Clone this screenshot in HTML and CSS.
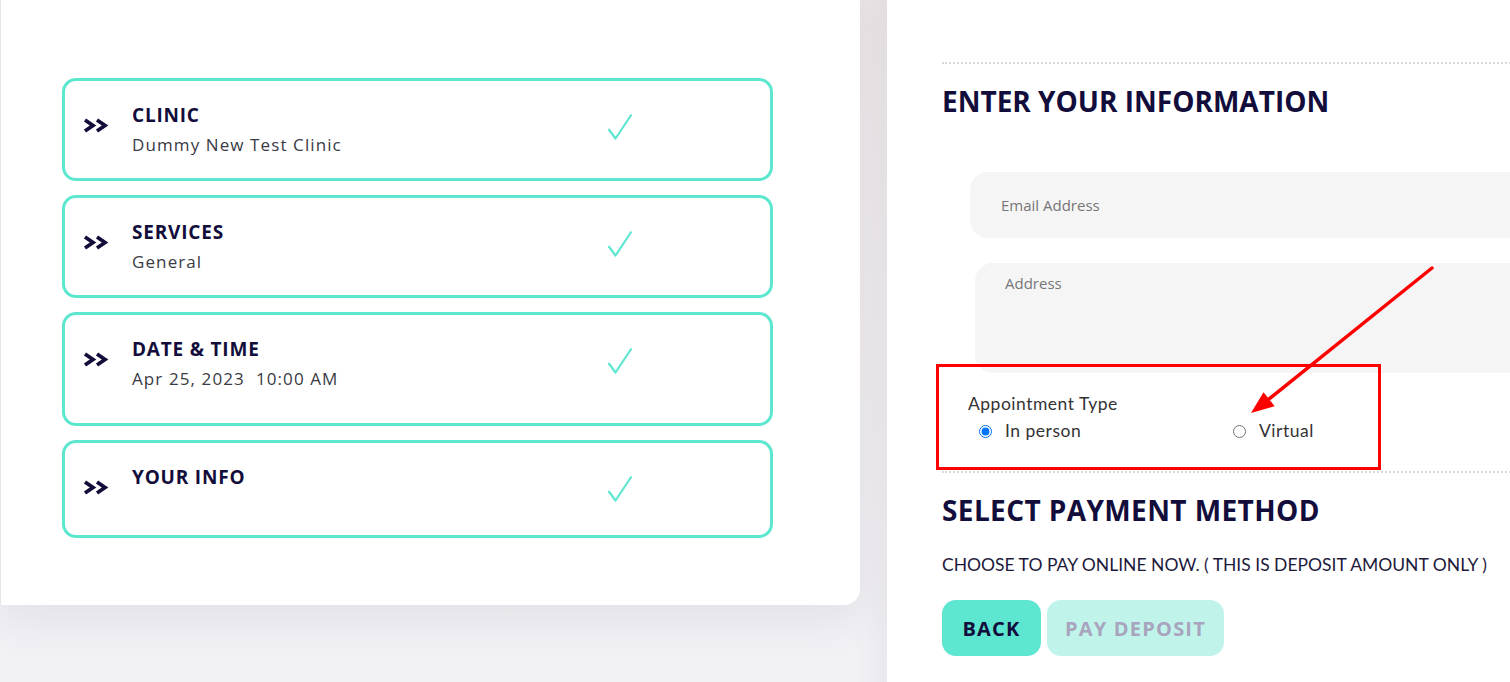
FILE: index.html
```html
<!DOCTYPE html>
<html lang="en">
<head>
    <meta charset="UTF-8">
    <meta name="viewport" content="width=device-width, initial-scale=1.0">
    <title>Book Appointment</title>
    <link rel="stylesheet" href="styles.css">
</head>
<body>

<div class="page">
    <!-- booking summary -->
    <section class="summary">
        <div class="step">
            <svg class="chevrons" width="26" height="15" viewBox="0 0 26 15"><path d="M2 2 L10 7.5 L2 13 M14 2 L22 7.5 L14 13" fill="none" stroke="#120d3b" stroke-width="3.8"/></svg>
            <div class="step-text">
                <h3>CLINIC</h3>
                <p>Dummy New Test Clinic</p>
            </div>
            <svg class="check" width="26" height="28" viewBox="0 0 26 28"><path d="M1.5 16 L8.5 25.5 L24.5 1.5" fill="none" stroke="#5de6d0" stroke-width="2.2" stroke-linejoin="round"/></svg>
        </div>
        <div class="step">
            <svg class="chevrons" width="26" height="15" viewBox="0 0 26 15"><path d="M2 2 L10 7.5 L2 13 M14 2 L22 7.5 L14 13" fill="none" stroke="#120d3b" stroke-width="3.8"/></svg>
            <div class="step-text">
                <h3>SERVICES</h3>
                <p>General</p>
            </div>
            <svg class="check" width="26" height="28" viewBox="0 0 26 28"><path d="M1.5 16 L8.5 25.5 L24.5 1.5" fill="none" stroke="#5de6d0" stroke-width="2.2" stroke-linejoin="round"/></svg>
        </div>
        <div class="step step-tall">
            <svg class="chevrons" width="26" height="15" viewBox="0 0 26 15"><path d="M2 2 L10 7.5 L2 13 M14 2 L22 7.5 L14 13" fill="none" stroke="#120d3b" stroke-width="3.8"/></svg>
            <div class="step-text">
                <h3>DATE &amp; TIME</h3>
                <p>Apr 25, 2023&nbsp;&nbsp;10:00 AM</p>
            </div>
            <svg class="check" width="26" height="28" viewBox="0 0 26 28"><path d="M1.5 16 L8.5 25.5 L24.5 1.5" fill="none" stroke="#5de6d0" stroke-width="2.2" stroke-linejoin="round"/></svg>
        </div>
        <div class="step step-short">
            <svg class="chevrons" width="26" height="15" viewBox="0 0 26 15"><path d="M2 2 L10 7.5 L2 13 M14 2 L22 7.5 L14 13" fill="none" stroke="#120d3b" stroke-width="3.8"/></svg>
            <div class="step-text">
                <h3>YOUR INFO</h3>
            </div>
            <svg class="check" width="26" height="28" viewBox="0 0 26 28"><path d="M1.5 16 L8.5 25.5 L24.5 1.5" fill="none" stroke="#5de6d0" stroke-width="2.2" stroke-linejoin="round"/></svg>
        </div>
    </section>

    <!-- form -->
    <section class="details">
        <hr class="dots">
        <h2>ENTER YOUR INFORMATION</h2>
        <input class="field field-email" type="email" placeholder="Email Address">
        <textarea class="field field-address" placeholder="Address"></textarea>

        <div class="appt">
            <div class="appt-label">Appointment Type</div>
            <div class="appt-options">
                <label class="opt opt-first"><input type="radio" name="type" checked> In person</label>
                <label class="opt"><input type="radio" name="type"> Virtual</label>
            </div>
        </div>

        <hr class="dots">
        <h2 class="h2-wide">SELECT PAYMENT METHOD</h2>
        <p class="note">CHOOSE TO PAY ONLINE NOW. ( THIS IS DEPOSIT AMOUNT ONLY )</p>
        <div class="actions">
            <button class="btn btn-back">BACK</button>
            <button class="btn btn-pay" disabled>PAY DEPOSIT</button>
        </div>
    </section>
</div>

<!-- annotation on top of the screenshot -->
<div class="callout"></div>
<svg class="pointer" width="1510" height="682" viewBox="0 0 1510 682">
    <line x1="1432" y1="268" x2="1264" y2="403" stroke="#ff0000" stroke-width="3.5" stroke-linecap="round"/>
    <polygon points="1251,413 1274.7,406.2 1263.5,392.2" fill="#ff0000"/>
</svg>

</body>
</html>
```

FILE: styles.css
```css
body {
    margin: 0;
    height: 682px;
    overflow: hidden;
    font-family: "Open Sans", Arial, sans-serif;
    color: #120d3b;
    background: linear-gradient(#ebe6e8, #f1f1f6);
}

.page {
    display: flex;
    align-items: flex-start;
    gap: 27px;
    margin-top: -20px;
}

/* left column */
.summary {
    flex: 0 0 860px;
    box-sizing: border-box;
    height: 625px;
    padding: 98px 0 0 61px;
    background: #fff;
    border-left: 1px solid #e6e6e8;
    border-radius: 0 0 16px 0;
    box-shadow: 0 14px 40px rgba(120, 95, 105, 0.10);
}

.step {
    display: grid;
    grid-template-columns: 49px 475px 30px;
    align-items: start;
    box-sizing: border-box;
    width: 711px;
    height: 103px;
    margin-bottom: 14px;
    padding: 22px 18px 0;
    border: 3px solid #5de6d0;
    border-radius: 14px;
}

.step-tall {
    height: 114px;
}

.step-short {
    height: 98px;
}

.chevrons {
    margin-top: 15px;
}

.check {
    margin-top: 10px;
}

.step-text h3 {
    margin: 0;
    font-size: 19px;
    line-height: 24px;
    font-weight: 700;
    letter-spacing: 0.8px;
}

.step-text p {
    margin: 6px 0 0;
    font-size: 17px;
    line-height: 24px;
    color: #3a3a44;
    letter-spacing: 1.1px;
}

/* right column */
.details {
    flex: 0 0 720px;
    box-sizing: border-box;
    height: 760px;
    padding: 82px 0 0 55px;
    background: #fff;
    border-radius: 22px 0 0 0;
    box-shadow: -6px 0 30px rgba(120, 95, 105, 0.08);
}

.dots {
    margin: 0;
    border: 0;
    border-top: 2px dotted #d9d9dc;
}

.details h2 {
    margin: 20px 0 0;
    font-size: 28px;
    line-height: 34px;
    font-weight: 700;
}

.details .h2-wide {
    letter-spacing: 0.4px;
}

.field {
    display: block;
    box-sizing: border-box;
    border: 0;
    outline: none;
    background: #f5f5f6;
    border-radius: 18px;
    font-family: "Open Sans", Arial, sans-serif;
    font-size: 15px;
    color: #333;
    resize: none;
}

.field::placeholder {
    color: #767676;
}

.field-email {
    width: 640px;
    height: 66px;
    margin: 54px 0 0 28px;
    padding: 0 31px;
}

.field-address {
    width: 640px;
    height: 110px;
    margin: 25px 0 0 33px;
    padding: 10px 30px;
    line-height: 20px;
}

.appt {
    padding: 20px 0 0 26px;
    height: 78px;
    font-family: Lato, Arial, sans-serif;
    font-size: 17.5px;
    letter-spacing: 0.5px;
    color: #333;
}

.appt-label {
    line-height: 22px;
}

.appt-options {
    display: flex;
    margin-top: 5px;
    padding-left: 11px;
}

.opt {
    display: flex;
    align-items: center;
    line-height: 22px;
}

.opt-first {
    width: 254px;
}

.opt input {
    width: 13px;
    height: 13px;
    margin: 0 13px 0 0;
}

.note {
    margin: 27px 0 0;
    font-family: Lato, Arial, sans-serif;
    font-size: 17.5px;
    line-height: 22px;
    color: #1d1a3c;
}

.actions {
    display: flex;
    gap: 6px;
    margin-top: 24px;
}

.btn {
    height: 56px;
    padding: 0;
    border: 0;
    border-radius: 14px;
    font-family: "Open Sans", Arial, sans-serif;
    font-size: 20px;
    font-weight: 700;
    letter-spacing: 1.2px;
}

.btn-back {
    width: 99px;
    background: #5de6d0;
    color: #120d3b;
}

.btn-pay {
    width: 177px;
    background: #c0f4eb;
    color: #a9a4bd;
}

/* red annotation box and arrow */
.callout {
    position: absolute;
    left: 936px;
    top: 364px;
    width: 445px;
    height: 106px;
    box-sizing: border-box;
    border: 3px solid #ff0000;
}

.pointer {
    position: absolute;
    left: 0;
    top: 0;
    pointer-events: none;
}
```
